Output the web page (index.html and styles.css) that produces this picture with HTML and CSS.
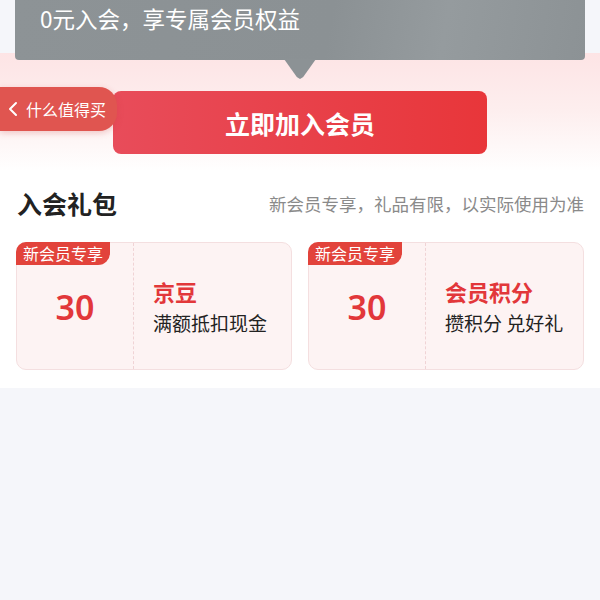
FILE: index.html
```html
<!DOCTYPE html>
<html lang="zh">
<head>
  <meta charset="UTF-8">
  <meta name="viewport" content="width=device-width, initial-scale=1.0">
  <title>入会礼包</title>
  <link rel="stylesheet" href="styles.css">
</head>
<body>
  <div class="hero">
    <div class="banner">
      <p>0元入会，享专属会员权益</p>
    </div>
    <div class="join-row">
      <a class="back-tab" href="#">
        <svg width="10" height="16" viewBox="0 0 10 16"><path d="M8 2 L2 8 L8 14" fill="none" stroke="#fff" stroke-width="2" stroke-linecap="round" stroke-linejoin="round"/></svg>
        什么值得买
      </a>
      <button class="join-btn">立即加入会员</button>
    </div>
  </div>

  <div class="gift">
    <div class="gift-head">
      <h2>入会礼包</h2>
      <span>新会员专享，礼品有限，以实际使用为准</span>
    </div>
    <div class="gift-grid">
      <div class="gift-card">
        <span class="badge">新会员专享</span>
        <div class="amount">30</div>
        <div class="info">
          <strong>京豆</strong>
          <span>满额抵扣现金</span>
        </div>
      </div>
      <div class="gift-card">
        <span class="badge">新会员专享</span>
        <div class="amount">30</div>
        <div class="info">
          <strong>会员积分</strong>
          <span>攒积分 兑好礼</span>
        </div>
      </div>
    </div>
  </div>
</body>
</html>
```

FILE: styles.css
```css
* {
  box-sizing: border-box;
}

body {
  margin: 0;
  font-family: "Noto Sans CJK SC", "Noto Sans", sans-serif;
  background: #f5f6fa;
  color: #222;
}

.hero {
  background: linear-gradient(to bottom, #f5f6fa 0, #f5f6fa 53px, #fde4e5 53px, #fdeeee 110px, #ffffff 172px);
  padding-bottom: 16px;
}

.banner {
  position: relative;
  margin: 0 15px;
  height: 60px;
  background: linear-gradient(100deg, #8d9396 0%, #8b9194 55%, #959b9e 75%, #8c9295 100%);
  border-radius: 0 0 4px 4px;
}

.banner::after {
  content: "";
  position: absolute;
  left: 50%;
  bottom: -19px;
  margin-left: -16px;
  width: 32px;
  height: 20px;
  background: #8c9295;
  clip-path: polygon(0 0, 100% 0, 60% 90%, 50% 100%, 40% 90%);
}

.banner p {
  margin: 0;
  padding: 0 0 0 25px;
  font-size: 22.5px;
  line-height: 36px;
  color: #fff;
}

.join-row {
  position: relative;
  display: flex;
  justify-content: center;
  padding-top: 31px;
}

.back-tab {
  position: absolute;
  left: 0;
  top: 27px;
  z-index: 2;
  display: flex;
  align-items: center;
  gap: 8px;
  height: 44px;
  padding: 0 11px 0 8px;
  background: #e05550;
  border-radius: 0 18px 18px 0;
  color: #fff;
  font-size: 16px;
  text-decoration: none;
  box-shadow: 0 2px 6px rgba(200, 60, 60, 0.25);
}

.join-btn {
  width: 374px;
  height: 63px;
  border: none;
  border-radius: 8px;
  background: linear-gradient(to right, #e84c5a, #e8363a);
  color: #fff;
  font-family: inherit;
  font-size: 25px;
  font-weight: bold;
}

.gift {
  background: #fff;
  padding: 10px 16px 18px;
}

.gift-head {
  display: flex;
  justify-content: space-between;
  align-items: center;
  height: 46px;
  margin-bottom: 16px;
}

.gift-head h2 {
  margin: 0 0 0 1px;
  font-size: 25px;
  font-weight: bold;
  color: #222;
}

.gift-head span {
  font-size: 17.5px;
  color: #8a8a8a;
}

.gift-grid {
  display: grid;
  grid-template-columns: 276px 276px;
  justify-content: space-between;
}

.gift-card {
  position: relative;
  display: flex;
  height: 128px;
  background: #fdf3f3;
  border: 1px solid #f4dfe0;
  border-radius: 10px;
}

.badge {
  position: absolute;
  left: -1px;
  top: -1px;
  height: 23px;
  padding: 0 7px;
  background: #e2433b;
  color: #fff;
  font-size: 16px;
  line-height: 23px;
  border-radius: 10px 0 12px 0;
}

.amount {
  width: 117px;
  display: flex;
  align-items: center;
  justify-content: center;
  padding-top: 2px;
  border-right: 1px dashed #f0d3d5;
  color: #e2373a;
  font-family: "Noto Sans", sans-serif;
  font-size: 34px;
  font-weight: 600;
}

.info {
  display: flex;
  flex-direction: column;
  justify-content: center;
  padding: 0 0 0 19px;
}

.info strong {
  color: #e2373a;
  font-size: 22px;
  line-height: 34px;
}

.info span {
  font-size: 19px;
  line-height: 30px;
  color: #222;
}
```
